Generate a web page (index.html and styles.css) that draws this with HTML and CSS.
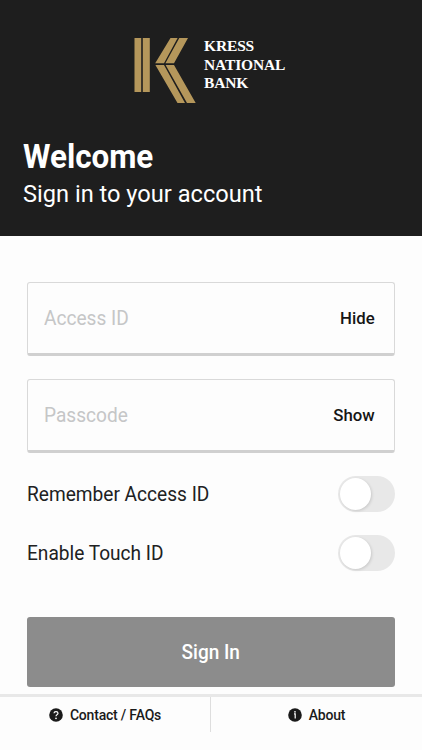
FILE: index.html
```html
<!DOCTYPE html>
<html lang="en">
<head>
<meta charset="utf-8">
<meta name="viewport" content="width=device-width, initial-scale=1">
<title>Kress National Bank</title>
<link rel="stylesheet" href="styles.css">
</head>
<body>
<main class="app">
  <header class="hero">
    <div class="brand">
      <svg class="brand-mark" viewBox="0 0 62 66" aria-hidden="true">
        <path d="M.5 0h6.7v54H.5zM8.8 0h7v54h-7zM36.5 0H43.6L30 25.3H21.2zM45.3 0H54L40 25.3H31.4zM21.4 27H30L51 65H43.5zM31.6 27H40L61.7 65H53z"/>
      </svg>
      <div class="brand-name">KRESS<br>NATIONAL<br>BANK</div>
    </div>
    <h1 class="title">Welcome</h1>
    <p class="subtitle">Sign in to your account</p>
  </header>
  <form class="form">
    <div class="field">
      <span class="placeholder">Access ID</span>
      <button type="button" class="reveal">Hide</button>
    </div>
    <div class="field">
      <span class="placeholder">Passcode</span>
      <button type="button" class="reveal">Show</button>
    </div>
    <div class="option"><span class="option-label">Remember Access ID</span><span class="switch"></span></div>
    <div class="option"><span class="option-label">Enable Touch ID</span><span class="switch"></span></div>
    <button type="button" class="submit"><span class="submit-label">Sign In</span></button>
  </form>
  <nav class="footer">
    <a class="link contact">
      <svg class="icon" viewBox="0 0 14 14" aria-hidden="true"><circle cx="7" cy="7" r="6.8"/><path class="stroke" d="M5 5.3C5.1 3 8.9 3 9 5.2C9 6.6 7 6.7 7 8.3"/><circle class="dot" cx="7" cy="10.3" r=".85"/></svg>
      <span>Contact / FAQs</span>
    </a>
    <a class="link">
      <svg class="icon" viewBox="0 0 14 14" aria-hidden="true"><circle cx="7" cy="7" r="6.8"/><path class="stroke" d="M6 5.9H7.2V10.6"/><circle class="dot" cx="7" cy="3.8" r=".85"/></svg>
      <span>About</span>
    </a>
  </nav>
</main>
</body>
</html>
```

FILE: styles.css
```css
* { box-sizing: border-box; }
body { margin: 0; background: #fdfdfd; color: #202122; font-family: Roboto, sans-serif; }
.app { height: 750px; overflow: hidden; }
.hero { height: 236px; padding: 38px 23px 0; background: #1e1e1e; color: #fff; }
.brand { display: flex; height: 66px; margin-left: 111px; }
.brand-mark { width: 62px; height: 66px; flex: none; fill: #b5975b; }
.brand-name { margin: -1px 0 0 8px; font: bold 15.5px/18.5px "Liberation Serif", serif; letter-spacing: -.15px; white-space: nowrap; }
.title { margin: 34px 0 0; font-size: 33px; line-height: 38px; font-weight: 700; transform: scaleX(.95); transform-origin: left; }
.subtitle { margin: 3px 0 0; font-size: 24.6px; line-height: 30px; transform: scaleX(.96); transform-origin: left; }
.form { padding: 46px 27px 0; }
.field { display: flex; align-items: center; justify-content: space-between; height: 74px; margin-bottom: 23px; padding: 0 19px 0 16px; border: 1px solid #d9d9d9; border-bottom: 3px solid #d0d0d0; border-radius: 3px; }
.placeholder { color: #c5c6c7; font-size: 20px; line-height: 24px; transform: scaleX(.955); transform-origin: left; }
button { font-family: inherit; border: 0; padding: 0; }
.reveal { background: none; color: #151515; font-size: 17.3px; font-weight: 500; line-height: 24px; transform: scaleX(.97); transform-origin: right; }
.option { display: flex; align-items: center; justify-content: space-between; height: 36px; margin-bottom: 23px; font-size: 20px; }
.option-label { transform: scaleX(.955); transform-origin: left; }
.switch { width: 57px; height: 36px; padding: 2px; border-radius: 18px; background: #e8e8e8; }
.switch::before { content: ""; display: block; width: 31px; height: 32px; border-radius: 50%; background: #fff; box-shadow: 1px 1px 3px #0002; }
.submit { display: block; width: 100%; height: 70px; margin-top: 46px; border-radius: 3px; background: #8c8c8c; color: #fff; font-size: 20px; font-weight: 500; }
.submit-label { display: inline-block; transform: scaleX(.95); }
.footer { display: flex; height: 38px; margin-top: 7px; border-top: 3px solid #e8e8e8; }
.link { display: flex; align-items: center; justify-content: center; gap: 7px; width: 211px; color: #1a1a1a; font-size: 14px; font-weight: 500; letter-spacing: -.2px; }
.contact { border-right: 1px solid #dedede; }
.icon { width: 14px; height: 14px; fill: #1a1a1a; }
.stroke { fill: none; stroke: #fff; stroke-width: 1.2; }
.dot { fill: #fff; }
```
